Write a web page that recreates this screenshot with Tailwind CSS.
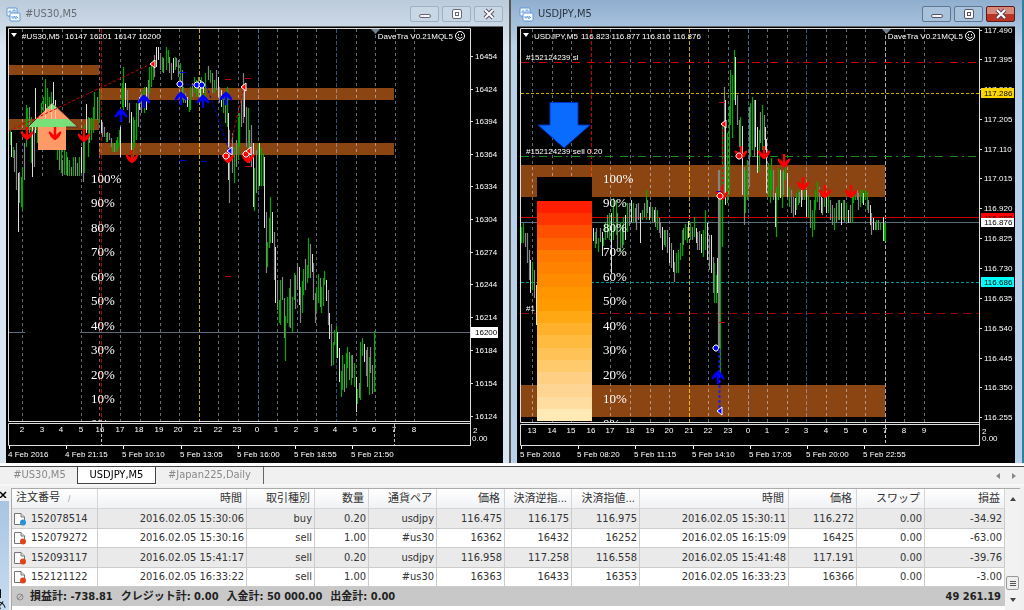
<!doctype html>
<html lang="ja">
<head>
  <meta charset="UTF-8">
  <meta name="viewport" content="width=device-width, initial-scale=1.0">
  <title>USDJPY,M5</title>
  <script src="https://cdn.jsdelivr.net/npm/@tailwindcss/browser@4"></script>
</head>
<body class="min-h-screen overflow-x-hidden bg-white font-['DejaVu_Sans_Condensed','DejaVu_Sans','Noto_Sans_CJK_JP',sans-serif] text-[11px] text-[#333]">

  <!-- shared symbols -->
  <svg class="absolute size-0" aria-hidden="true">
    <defs>
      <g id="down"><path d="M0 -7V3" stroke="#f00" stroke-width="2.4"/><path d="M-6 -2Q-5 3 0 6Q5 3 6 -2L5 -2Q2 0 0 3Q-2 0 -5 -2Z" fill="#f00" stroke="#f00"/></g>
      <g id="up"><path d="M0 7V-3" stroke="#00f" stroke-width="2.4"/><path d="M-6 2Q-5 -3 0 -6Q5 -3 6 2L5 2Q2 0 0 -3Q-2 0 -5 2Z" fill="#00f" stroke="#00f"/></g>
      <path id="close-red" d="M2 -4V4L-3 0Z" fill="#f00" stroke="#fff"/>
      <path id="close-blue" d="M2 -4V4L-3 0Z" fill="#00f" stroke="#fff"/>
      <path id="open-red" d="M-3 -1L-1 -3H1L3 -1V1L1 3H-1L-3 1Z" fill="#f00" stroke="#fff"/>
      <path id="open-blue" d="M-3 -1L-1 -3H1L3 0L1 3H-1L-3 1Z" fill="#00f" stroke="#fff"/>
      <g id="smile" fill="none" stroke="#fff"><circle r="4.5"/><path d="M-2.500 1Q0 4 2.500 1"/><path d="M-1.500 -2V-.5M1.500 -2V-.5"/></g>
      <g id="chart-icon">
        <rect x="1" y="1" width="10" height="8" rx="1" fill="#fff" stroke="#5b97dc"/>
        <path d="M3 6V4h2v3h2V3h2v3" fill="none" stroke="#6aa0e0"/>
        <rect x="4" y="6" width="10" height="8" rx="1" fill="#fff" stroke="#5b97dc"/>
        <path d="M6 9v2h2V9l2 3V9l2 2" fill="none" stroke="#6aa0e0"/>
      </g>
      <g id="page">
        <path d="M1.500 1.500H8L11.500 5V12.500H1.500Z" fill="#fff" stroke="#777"/>
        <path d="M8 1.500V5h3.500" fill="#ddd" stroke="#777"/>
      </g>
    </defs>
  </svg>

  <main class="grid grid-cols-[511fr_513fr]">
    <section class="border-r-2 border-[#555] bg-linear-to-b from-[#bccbda] to-[#d7e4f1] to-10% px-1.5">
      <header class="flex h-[26px] items-center gap-1 pt-0.5">
        <svg class="size-[15px]" viewBox="0 0 15 15"><use href="#chart-icon"/></svg>
        <h2 class="grow text-[#666d75]">#US30,M5</h2>
        <button aria-label="最小化" class="flex h-4 w-[29px] items-end justify-center rounded-xs border border-[#9fb0c3] bg-[#c9d6e3] pb-[3px]"><span class="h-1 w-3 rounded-xs border border-[#667] bg-white"></span></button>
        <button aria-label="最大化" class="-ml-px flex h-4 w-[29px] items-center justify-center rounded-xs border border-[#9fb0c3] bg-[#c9d6e3]"><span class="size-[10px] rounded-xs border border-[#667] bg-white p-[2px]"><span class="block size-1 border border-[#667]"></span></span></button>
        <button aria-label="閉じる" class="-ml-px flex h-4 w-[29px] items-center justify-center rounded-xs border border-[#9fb0c3] bg-[#c9d6e3]"><svg class="h-3 w-3" viewBox="0 0 12 12"><path d="M2 2L10 10M10 2L2 10" stroke="#556" stroke-width="4"/><path d="M2 2L10 10M10 2L2 10" stroke="#fff" stroke-width="2"/></svg></button>
      </header>
      <svg id="us30" class="block w-full bg-black" viewBox="6 26 497 437" font-family="Liberation Sans, Arial, sans-serif" font-size="8" fill="#fff"></svg>
    </section>

    <section class="border-r-2 border-[#2f7f9d] bg-linear-to-b from-[#90aece] to-[#b9d1ea] to-10% pl-1.5 pr-[7px]">
      <header class="flex h-[26px] items-center gap-1 pt-0.5">
        <svg class="ml-0.5 size-[15px]" viewBox="0 0 15 15"><use href="#chart-icon"/></svg>
        <h2 class="grow text-[#2a3540]">USDJPY,M5</h2>
        <button aria-label="最小化" class="flex h-4 w-[29px] items-end justify-center rounded-xs border border-[#5f7690] bg-[#a9c2dc] pb-[3px]"><span class="h-1 w-3 rounded-xs border border-[#556] bg-white"></span></button>
        <button aria-label="最大化" class="-ml-px flex h-4 w-[29px] items-center justify-center rounded-xs border border-[#5f7690] bg-[#a9c2dc]"><span class="size-[10px] rounded-xs border border-[#556] bg-white p-[2px]"><span class="block size-1 border border-[#556]"></span></span></button>
        <button aria-label="閉じる" class="-ml-px flex h-4 w-[29px] items-center justify-center rounded-xs border border-[#5a1a18] bg-linear-to-b from-[#d9897c] from-50% to-[#b93424] to-50%"><svg class="h-3 w-3" viewBox="0 0 12 12"><path d="M2 2L10 10M10 2L2 10" stroke="#545" stroke-width="4"/><path d="M2 2L10 10M10 2L2 10" stroke="#fff" stroke-width="2"/></svg></button>
      </header>
      <svg id="usdjpy" class="block w-full bg-black" viewBox="517 26 498 437" font-family="Liberation Sans, Arial, sans-serif" font-size="8" fill="#fff"></svg>
    </section>
  </main>

  <nav class="mt-[3px] flex h-[18px] items-stretch border-t border-[#444] bg-[#f0f0f0] text-[#888]">
    <button class="w-[77px] pl-0.5">#US30,M5</button>
    <button class="w-[79px] border-x border-b border-[#444] bg-white text-black">USDJPY,M5</button>
    <button class="w-[108px]"><span class="block border-r border-[#666]">#Japan225,Daily</span></button>
    <div class="ml-auto flex items-center gap-3 pr-2">
      <button aria-label="前へ"><svg class="h-2 w-1" viewBox="0 0 4 8"><path d="M4 1V7L0 4Z" fill="#888"/></svg></button>
      <button aria-label="次へ"><svg class="h-2 w-1" viewBox="0 0 4 8"><path d="M0 1V7L4 4Z" fill="#888"/></svg></button>
    </div>
  </nav>

  <div class="flex border-t-2 border-[#f8f8f8] bg-[#f0f0f0] pt-0.5">
    <aside class="flex w-[11px] shrink-0 flex-col overflow-hidden pr-0.5">
      <button aria-label="閉じる" class="h-[13px]"><svg class="h-[7px] w-[7px]" viewBox="0 0 7 7"><path d="M0 1L6 7M6 1L0 7" stroke="#000" stroke-width="1.500"/></svg></button>
      <div class="h-0 grow overflow-hidden bg-linear-to-b from-[#a9c4e2] to-[#c8dcf0] pt-[84px]">
        <span class="-ml-1.5 block w-4 rotate-180 text-black [text-orientation:sideways] [writing-mode:vertical-rl]">ターミナル</span>
      </div>
    </aside>
    <div class="w-0 grow border-t border-l border-[#aaa] bg-white pb-1">
      <table class="w-full table-fixed border-separate border-spacing-0 text-right whitespace-nowrap">
        <colgroup>
          <col class="w-[86px]"><col class="w-[149px]"><col class="w-[68px]"><col class="w-[54px]"><col class="w-[68px]"><col class="w-[68px]">
          <col class="w-[67px]"><col class="w-[68px]"><col class="w-[149px]"><col class="w-[68px]"><col class="w-[68px]"><col>
        </colgroup>
        <thead class="[&_th]:h-5 [&_th]:border-b [&_th]:border-r [&_th]:border-[#d5d5d5] [&_th]:bg-linear-to-b [&_th]:from-white [&_th]:to-[#f1f2f4] [&_th]:p-0 [&_th]:pr-1 [&_th]:font-normal [&_th]:leading-4">
          <tr>
            <th class="text-left"><span class="pl-1">注文番号</span><span class="pl-2 text-[8px] text-[#888]">∕</span></th>
            <th>時間</th><th>取引種別</th><th>数量</th><th>通貨ペア</th><th>価格</th><th>決済逆指...</th><th>決済指値...</th><th>時間</th><th>価格</th><th>スワップ</th><th>損益</th>
          </tr>
        </thead>
        <tbody id="orders" class="[&_td]:border-b [&_td]:border-r [&_td]:border-[#ccc] [&_td]:p-0 [&_td]:pr-0.5 [&_td]:leading-4 [&_tr:nth-child(even)_td]:h-[19px] [&_tr:nth-child(odd)_td]:h-5 [&_tr:nth-child(odd)_td]:bg-[#eaeaea]"></tbody>
        <tfoot>
          <tr class="bg-[#c8c8c8] font-bold text-[#222]">
            <td colspan="11" class="h-[19px] p-0 text-left leading-4">
              <div class="flex items-center gap-2 pl-1">
                <svg class="size-2" viewBox="0 0 8 8"><circle cx="4" cy="4" r="3" fill="none" stroke="#888"/><path d="M2 6L6 2" stroke="#888"/></svg>
                <span class="-ml-0.5">損益計: -738.81</span><span>クレジット計: 0.00</span><span>入金計: 50 000.00</span><span>出金計: 0.00</span>
              </div>
            </td>
            <td class="h-[19px] p-0 pr-1 leading-4">49 261.19</td>
          </tr>
        </tfoot>
      </table>
    </div>
    <div class="mr-1 flex w-[15px] shrink-0 flex-col items-center border-t border-[#aaa] bg-[#f2f2f2] py-1">
      <button aria-label="上へ" class="flex h-3 items-center"><svg class="h-1 w-1.5" viewBox="0 0 6 4"><path d="M3 0L6 4H0Z" fill="#444"/></svg></button>
      <div class="mb-1 mt-auto flex h-[14px] w-[13px] flex-col items-center justify-center gap-px rounded-xs border border-[#999] bg-[#eee]">
        <span class="h-px w-1.5 bg-[#555]"></span><span class="h-px w-1.5 bg-[#555]"></span><span class="h-px w-1.5 bg-[#555]"></span>
      </div>
      <button aria-label="下へ" class="flex h-3 items-center"><svg class="h-1 w-1.5" viewBox="0 0 6 4"><path d="M3 4L6 0H0Z" fill="#444"/></svg></button>
    </div>
  </div>

  <script>
    // bars: x, colour (n = green, g = grey, w = white), high-low
    const us30Bars = `10n130-145 11w132-157 13n147-158 14g150-172 16g143-190 18w173-232 19g172-203 21n177-207 22n167-210 24g143-180
      26n105-147 27n108-125 29g107-133 31n117-163 32w123-177 34g130-167 35w88-133 37n123-143 39g117-137 41n103-133 43n97-127
      45n79-110 47n88-113 49n97-117 51n92-110 53w82-110 55w100-147 57n127-160 59g150-170 61n143-173 62g160-176 64n147-175
      66n152-175 67g157-176 69n160-176 71g167-176 73n157-176 75g157-176 77g163-176 79n157-176 81w147-173 83g133-182 84n125-173
      86w104-133 88n117-157 89g118-143 91n118-140 93n107-133 94n92-120 97g97-120 99n90-123 101w120-133 102g122-137 104g127-137
      106n133-142 107g132-142 109g133-140 111g138-147 112n143-152 114g143-152 116n140-152 117n137-150 119n130-147 120w127-157
      122n83-107 123n67-110 125w83-107 127g90-110 129g103-123 131w112-153 133n117-157 134n120-147 136n103-140 138g100-127
      139w97-110 141g93-113 143n90-103 144n87-113 146w87-110 148g80-103 149n67-93 151n63-87 153n60-80 154g55-77 156w47-67
      158w47-60 160g53-70 162n57-72 163g58-73 166n47-70 168n50-63 169g57-73 171g63-80 173w58-73 175n57-70 176g58-67 178g60-77
      180n63-83 182g70-93 183n87-103 185g93-103 187w97-107 189n100-112 190n87-110 192g83-97 194n77-93 196n80-97 198g77-97
      200w80-100 201n77-97 203w83-93 205n73-100 208g66-80 210n70-83 212g73-93 214n80-93 216g70-90 218w77-97 219g87-103
      221w90-107 223n97-113 225g103-123 227n87-127 228w113-180 229g130-203 232g133-173 234n147-183 236g140-167 238n117-160
      239n113-147 241g100-127 243g73-123 244w90-117 246g107-147 248n108-150 249g130-163 251g125-167 253w143-207 254n168-211
      256g150-193 258n143-190 259w143-186 261n148-186 263n153-186 264w157-228 266g212-273 267n242-267 269n218-248 270n197-243
      272w212-243 274g232-280 275w247-303 277g280-310 279n300-323 280n280-325 282g277-300 284g298-338 285n316-361 287n297-323
      289n288-327 290g279-328 292n297-333 294n273-300 295g275-309 297g263-290 299w267-305 300g287-323 302n281-313 303n269-295
      305g259-290 307n265-283 308n238-278 310g244-278 312w254-272 313g263-300 315g293-323 316n287-311 318n274-303 320g278-307
      321n287-313 323n278-306 324n271-285 326w280-301 328g290-325 329w313-339 331g324-366 333n342-365 334n330-345 336n326-358
      337w332-358 339w348-382 341n371-397 342n355-390 344g364-392 346n353-388 347n347-368 349g352-380 351n355-385 352g355-378
      354n363-387 356w377-412 357n389-404 359g383-398 360n342-400 362n338-356 364w344-362 366g350-376 367g347-387 369n357-395
      370g347-373 372g365-394 374n331-392`;
    const usdjpyBars = `521n227-243 523n223-243 525g233-247 527g233-263 529g250-280 530w260-293 532n262-290 534g270-298 536w285-325
      593w228-241 595n232-248 596g228-244 598n238-252 600g228-242 602w232-256 603n238-246 605n222-240 607g215-238 609n213-240
      611w213-273 613n198-240 616n200-235 617g213-248 620n222-252 622g225-248 623n217-245 625w215-240 627n203-232 629g203-226
      631w200-222 633n203-223 635g208-222 636g204-230 638g203-220 640w213-243 642n210-220 644g203-217 646n190-220 647g200-213
      649w207-220 650g202-218 652n207-222 654w210-222 655g207-227 657n210-230 659g218-233 660g222-238 662w227-250 664g230-245
      665n230-247 667g230-253 669w237-263 671g243-268 673w250-272 674g262-282 676n253-273 678n250-273 680n243-260 682n230-256
      683g228-245 685n224-240 687n227-243 688w221-238 690n222-240 692g227-240 694n217-237 696w228-243 697g232-250 699g231-250
      701w234-253 703n230-257 705n210-250 707w223-260 709g235-270 711w235-273 713g257-293 714n263-303 716n275-303 717w258-293
      718g170-348 719g170-348 720n195-373 722n125-247 724g87-195 725w100-205 727n133-203 729n106-195 730n70-125 732n75-138
      734n50-100 735w57-105 737g95-125 739g120-147 740n117-157 742w126-195 744g167-225 745n170-213 747n160-200 749g107-187
      750n103-157 752n97-150 754g100-157 755w100-147 757w127-173 759n130-172 760g112-143 762n105-150 764g115-140 765w127-150
      766w139-193 768n163-197 770n170-203 771n158-190 773g170-200 775w193-227 776n187-237 778n168-200 780w170-198 782n172-208
      783g170-195 785n168-180 787w173-197 789n187-207 791g190-213 793g197-217 795w198-215 796n193-210 798n190-205 799g192-203
      801w190-207 802g187-200 804n190-200 806w190-217 808n195-218 810g200-228 812n210-237 814n200-230 815n190-210 817n182-202
      819g187-210 821w197-213 822g198-215 824n197-207 826w196-213 828n195-213 830g200-220 832g205-225 834n208-230 836g203-223
      838n200-220 839g200-220 841w203-225 843n200-220 844g200-222 846n203-222 848w210-223 850g205-223 852n193-223 853n192-203
      855n190-200 857g190-200 858g193-210 860n190-207 862n190-203 863w193-205 865n190-200 867n192-210 868g200-213 870w205-225
      871g213-235 873w218-230 875g222-230 876n220-230 878g220-230 880n222-230 883w217-241 884n223-241 885n223-241`;

    const barColor = { n: '#00aa00', g: '#858585', w: '#dedede' };
    const bars = text => '<g transform="translate(.5 0)">' + text.trim().split(/\s+/).map(b => {
      const [, x, c, hi, lo] = b.match(/(\d+)([ngw])(\d+)-(\d+)/);
      return `<path d="M${x} ${hi}V${lo}" stroke="${barColor[c]}" stroke-width="${c === 'w' ? 1 : 1.2}"/>`;
    }).join('') + '</g>';

    const text = (x, y, s, extra = '') => `<text x="${x}" y="${y}" ${extra}>${s}</text>`;
    const hline = (x1, x2, y, color, dash = 'none') => `<path d="M${x1} ${y}.5H${x2}" stroke="${color}" stroke-dasharray="${dash}"/>`;
    const marks = (id, points) => points.map(([x, y]) => `<use href="#${id}" x="${x}" y="${y}"/>`).join('');
    const ticks = (color, points) => points.map(([x, y]) => hline(x, x + 6, y, color)).join('');

    // vertical hour lines
    const step = 19.6;
    const grid = (x0, n, bottom, special) => Array.from({ length: n }, (_, i) =>
      `<path d="M${Math.round(x0 + i * step)}.5 29V${bottom}" stroke="${special[i] || '#5d6d7c'}" stroke-dasharray="${special[i] ? '4 2' : '3 3'}"/>`).join('');
    const hours = (x0, first, n, y) => Array.from({ length: n }, (_, i) =>
      text(Math.round(x0 + i * step), y, (first + i) % 24, 'text-anchor="middle"')).join('');
    const bands = list => list.map(([x, y, w, h]) => `<rect x="${x}" y="${y}" width="${w}" height="${h}" fill="#8b4513" style="mix-blend-mode:screen"/>`).join('');

    const percents = (x, bottom) => `<svg x="${x}" y="160" width="50" height="${bottom - 160}"><g font-family="Liberation Serif, serif" font-size="13">` +
      Array.from({ length: 11 }, (_, i) => text(0, Math.floor(23 + i * 24.5), `${100 - i * 10}%`)).join('') + '</g></svg>';
    const frame = (l, r, b) => `<path d="M6 26.5H1015" stroke="#666"/><path d="M${l}.5 ${b}.5V28.5H${r}.5V445.5H${l}.5V${b + 2}.5H${r}.5M${l}.5 ${b}.5H${r}.5" fill="none" stroke="#ddd"/>`;
    const dates = (x, list) => list.map((d, i) => {
      const left = Math.round(x + i * 57.2);
      return `<path d="M${left + 1}.5 446V449" stroke="#fff"/>` + text(left, 457, d);
    }).join('');
    const prices = (x, list) => list.map(([y, p]) => hline(x - 4, x - 1, y, '#ddd') + text(x + 1, y + 3, p)).join('');

    document.getElementById('us30').innerHTML =
      grid(22.4, 21, 421, { 4: '#c00000', 9: '#c8aa00', 12: '#376a94', 16: '#2c557a' }) +
      '<path d="M99.500 29V421" stroke="#667" stroke-dasharray="3 3"/>' +
      bands([[9, 65, 90, 10], [9, 119, 90, 11], [99, 88, 295, 12], [99, 143, 295, 12]]) +
      hline(9, 470, 332, '#5d6d7c') +
      '<rect x="25" y="176" width="55" height="245" fill="#000"/>' +
      bars(us30Bars) +
      '<path d="M52 103L78 127H66V150H38V127H28Z" fill="#ff9a66"/><path d="M36 119H68L78 127H28Z" fill="#78e078"/><path d="M28 127L52 103L78 127H66" fill="none" stroke="#6b2330"/><path d="M46 109L52 103L58 109Z" fill="#78e078"/>' +
      '<path d="M45.500 104V119M51.500 104V119M55.500 107V119" stroke="#ffd0b0"/>' +
      '<path d="M9 131L153 63M229 152L244 87" stroke="#c00" stroke-dasharray="3 2"/>' +
      '<path d="M181 84L207 87L229 150" fill="none" stroke="#00c" stroke-dasharray="3 2"/>' +
      ticks('#c00', [[225, 79], [245, 78], [225, 276], [245, 166]]) + ticks('#00c', [[180, 72], [180, 160], [201, 161]]) +
      marks('down', [[27, 134], [55, 134], [84, 136], [132, 157], [228, 157], [248, 157]]) +
      marks('up', [[121, 115], [144, 101], [181, 98], [203, 101], [226, 98]]) +
      marks('open-blue', [[180, 84], [197, 85], [202, 85]]) + marks('close-blue', [[230, 151]]) +
      marks('open-red', [[226, 156], [246, 154]]) + marks('close-red', [[153, 64], [244, 87], [249, 151]]) +
      percents(91, 421) + frame(8, 470, 421) +
      '<path d="M101.500 424V445M394.500 424V445" stroke="#bbb" stroke-dasharray="3 2"/>' +
      hours(22, 2, 4, 432) + hours(100, 16, 17, 432) +
      dates(8, ['4 Feb 2016', '4 Feb 21:15', '5 Feb 10:10', '5 Feb 13:05', '5 Feb 16:00', '5 Feb 18:55', '5 Feb 21:50']) +
      prices(474, [[56, 16454], [89, 16424], [121, 16394], [154, 16364], [186, 16334], [219, 16304], [252, 16274], [284, 16244], [317, 16214], [350, 16184], [383, 16154], [416, 16124]]) +
      '<rect x="471" y="327" width="27" height="11" fill="#fff"/>' + text(475, 335, '16200', 'fill="#000"') +
      text(473, 433, '2') + text(472, 441, '0.00') +
      '<path d="M11 33H17L14 37Z"/><path d="M371 29H380L375.500 34Z" fill="#708090"/>' +
      text(22, 39, '#US30,M5') + text(65, 39, '16147 16201 16147 16200') + text(453, 39, 'DaveTra V0.21MQL5', 'text-anchor="end"') +
      '<use href="#smile" x="460" y="36"/>';

    // strength gauge, hot at the top
    const heat = ['#ff1e00', '#ff3400', '#ff4f00', '#ff6200', '#ff7b00', '#ff8300', '#ff8c00', '#ff9600', '#ff9b00',
      '#ffa814', '#ffb12b', '#ffba40', '#ffc257', '#ffca6c', '#ffd083', '#ffd593', '#ffdca0', '#ffeab5'];
    const gauge = '<rect x="537" y="177" width="55" height="244" fill="#000"/>' + heat.map((c, i) => {
      const y = Math.round(201 + i * 12.22);
      return `<rect x="537" y="${y}" width="55" height="${421 - y}" fill="${c}"/>`;
    }).join('');

    document.getElementById('usdjpy').innerHTML =
      grid(532, 21, 422, { 3: '#d00000', 8: '#c8aa00', 11: '#376a94', 14: '#2c557a', 18: '#aaa' }) +
      bands([[521, 165, 364, 32], [521, 385, 364, 32]]) +
      hline(521, 979, 62, '#c80000', '8 4 2 4 8 7') + hline(521, 979, 93, '#c8aa00', '3 2') +
      hline(521, 979, 156, '#1a8c1a', '8 4 2 4 8 7') + hline(521, 979, 217, '#d00000') + hline(521, 979, 222, '#5d6d7c') +
      hline(521, 979, 282, '#009a9a', '3 2') + hline(521, 979, 313, '#9a0000', '8 5') +
      bars(usdjpyBars) + text(526, 311, '#1') + gauge +
      '<path d="M550 102.500H578V125H590L564 148L538 125H550Z" fill="#0a6cff" stroke="#0030c0"/>' +
      '<path d="M722.500 124V196" stroke="#e00" stroke-dasharray="3 2"/><path d="M719.500 350V411" stroke="#22d" stroke-width="2" stroke-dasharray="3 2"/>' +
      ticks('#c00', [[719, 102], [719, 322]]) + ticks('#00c', [[716, 191]]) +
      marks('down', [[722, 194], [741, 153], [764, 153], [784, 161], [803, 184], [825, 192], [851, 192]]) +
      marks('up', [[718, 377]]) + marks('open-blue', [[716, 348]]) + marks('close-blue', [[720, 411]]) +
      marks('open-red', [[739, 156], [720, 196]]) + marks('close-red', [[724, 124]]) +
      percents(603, 422) + frame(520, 979, 422) +
      '<path d="M885.500 425V445" stroke="#ccc" stroke-dasharray="3 2"/>' +
      hours(532, 13, 21, 433) +
      dates(520, ['5 Feb 2016', '5 Feb 08:20', '5 Feb 11:15', '5 Feb 14:10', '5 Feb 17:05', '5 Feb 20:00', '5 Feb 22:55']) +
      prices(983, [[30, '117.490'], [59, '117.395'], [89, '117.300'], [119, '117.205'], [149, '117.110'], [178, '117.015'], [208, '116.920'], [238, '116.825'], [268, '116.730'], [298, '116.635'], [328, '116.540'], [358, '116.445'], [387, '116.350'], [417, '116.255']]) +
      '<rect x="981" y="88" width="33" height="10" fill="#ffd700"/>' + text(984, 96, '117.286', 'fill="#000"') +
      '<rect x="981" y="213" width="33" height="10" fill="#f00"/>' + text(984, 221, '116.892', 'fill="#000"') +
      '<rect x="981" y="218" width="33" height="9" fill="#fff"/>' + text(984, 225, '116.876', 'fill="#000"') +
      '<rect x="981" y="277" width="33" height="10" fill="#0ff"/>' + text(984, 285, '116.686', 'fill="#000"') +
      text(982, 434, '2') + text(982, 441, '0.00') +
      '<path d="M523 33H529L526 37Z"/><path d="M882 29H891L886.500 34Z" fill="#708090"/>' +
      text(534, 39, 'USDJPY,M5') + text(581, 39, '116.823 116.877 116.816 116.876') + text(963, 39, 'DaveTra V0.21MQL5', 'text-anchor="end"') +
      '<use href="#smile" x="970" y="36"/>' +
      text(526, 60, '#152124239 sl') + text(526, 154, '#152124239 sell 0.20');

    const orders = [
      ['152078514', '2016.02.05 15:30:06', 'buy', '0.20', 'usdjpy', '116.475', '116.175', '116.975', '2016.02.05 15:30:11', '116.272', '0.00', '-34.92'],
      ['152079272', '2016.02.05 15:30:16', 'sell', '1.00', '#us30', '16362', '16432', '16252', '2016.02.05 16:15:09', '16425', '0.00', '-63.00'],
      ['152093117', '2016.02.05 15:41:17', 'sell', '0.20', 'usdjpy', '116.958', '117.258', '116.558', '2016.02.05 15:41:48', '117.191', '0.00', '-39.76'],
      ['152121122', '2016.02.05 16:33:22', 'sell', '1.00', '#us30', '16363', '16433', '16353', '2016.02.05 16:33:23', '16366', '0.00', '-3.00'],
    ];
    document.getElementById('orders').innerHTML = orders.map(([id, ...cells]) => `
      <tr>
        <td><div class="flex items-center gap-1 pl-px">
          <svg class="size-[14px]" viewBox="0 0 14 14"><use href="#page"/><circle cx="10" cy="10.500" r="3" fill="${cells[1] === 'buy' ? '#2a8fd8' : '#e0421c'}"/></svg>${id}
        </div></td>
        ${cells.map(c => `<td>${c}</td>`).join('')}
      </tr>`).join('');
  </script>
</body>
</html>
